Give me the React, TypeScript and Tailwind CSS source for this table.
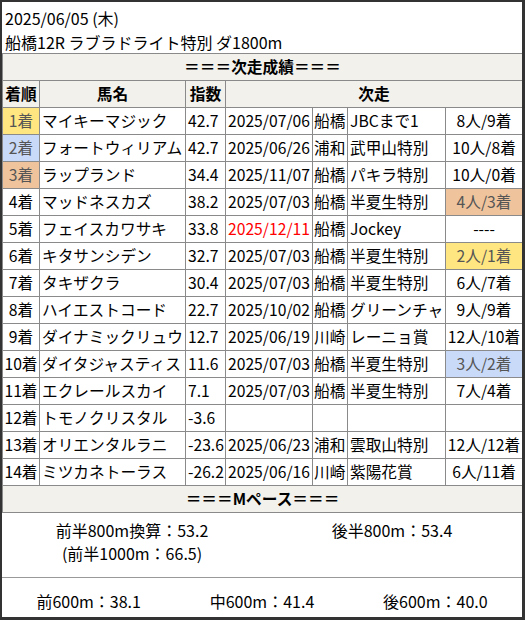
import React from "react";

type Row = {
  pos: string;
  name: string;
  idx: string;
  date: string;
  venue: string;
  race: string;
  res: string;
  posBg?: string;
  resBg?: string;
  red?: boolean;
};

const rows: Row[] = [
  { pos: "1着", name: "マイキーマジック", idx: "42.7", date: "2025/07/06", venue: "船橋", race: "JBCまで1", res: "8人/9着", posBg: "bg-[#ffe680]" },
  { pos: "2着", name: "フォートウィリアム", idx: "42.7", date: "2025/06/26", venue: "浦和", race: "武甲山特別", res: "10人/8着", posBg: "bg-[#c9daf8]" },
  { pos: "3着", name: "ラップランド", idx: "34.4", date: "2025/11/07", venue: "船橋", race: "パキラ特別", res: "10人/0着", posBg: "bg-[#efc49d]" },
  { pos: "4着", name: "マッドネスカズ", idx: "38.2", date: "2025/07/03", venue: "船橋", race: "半夏生特別", res: "4人/3着", resBg: "bg-[#efc49d]" },
  { pos: "5着", name: "フェイスカワサキ", idx: "33.8", date: "2025/12/11", venue: "船橋", race: "Jockey", res: "----", red: true },
  { pos: "6着", name: "キタサンシデン", idx: "32.7", date: "2025/07/03", venue: "船橋", race: "半夏生特別", res: "2人/1着", resBg: "bg-[#ffe680]" },
  { pos: "7着", name: "タキザクラ", idx: "30.4", date: "2025/07/03", venue: "船橋", race: "半夏生特別", res: "6人/7着" },
  { pos: "8着", name: "ハイエストコード", idx: "22.7", date: "2025/10/02", venue: "船橋", race: "グリーンチャ", res: "9人/9着" },
  { pos: "9着", name: "ダイナミックリュウ", idx: "12.7", date: "2025/06/19", venue: "川崎", race: "レーニョ賞", res: "12人/10着" },
  { pos: "10着", name: "ダイタジャスティス", idx: "11.6", date: "2025/07/03", venue: "船橋", race: "半夏生特別", res: "3人/2着", resBg: "bg-[#c9daf8]" },
  { pos: "11着", name: "エクレールスカイ", idx: "7.1", date: "2025/07/03", venue: "船橋", race: "半夏生特別", res: "7人/4着" },
  { pos: "12着", name: "トモノクリスタル", idx: "-3.6", date: "", venue: "", race: "", res: "" },
  { pos: "13着", name: "オリエンタルラニ", idx: "-23.6", date: "2025/06/23", venue: "浦和", race: "雲取山特別", res: "12人/12着" },
  { pos: "14着", name: "ミツカネトーラス", idx: "-26.2", date: "2025/06/16", venue: "川崎", race: "紫陽花賞", res: "6人/11着" },
];

const cell = "border border-[#8a8a8a] h-[27px] p-0 whitespace-nowrap overflow-hidden";

export default function App() {
  return (
    <div
      className="w-[525px] h-[620px] bg-white border-t-2 border-l-2 border-r-[3px] border-b-[3px] border-[#333333] text-black text-[16px] leading-[24px] overflow-hidden flex flex-col"
      style={{ fontFamily: '"Noto Sans CJK JP", "Noto Sans", sans-serif' }}
    >
      <div className="pt-[4px] pl-[3px] h-[51px]">
        <div>2025/06/05 (木)</div>
        <div>船橋12R ラブラドライト特別 ダ1800m</div>
      </div>
      <table className="w-[520px] table-fixed border-collapse text-[15.7px]">
        <colgroup>
          <col className="w-[37px]" />
          <col className="w-[146px]" />
          <col className="w-[40px]" />
          <col className="w-[87px]" />
          <col className="w-[35px]" />
          <col className="w-[98px]" />
          <col className="w-[77px]" />
        </colgroup>
        <tbody>
          <tr className="bg-[#f2f1ec]">
            <td colSpan={7} className={`${cell} text-center font-bold`}>
              ＝＝＝次走成績＝＝＝
            </td>
          </tr>
          <tr className="bg-[#f2f1ec] font-bold">
            <td className={`${cell} text-center`}>着順</td>
            <td className={`${cell} text-center`}>馬名</td>
            <td className={`${cell} text-center`}>指数</td>
            <td colSpan={4} className={`${cell} text-center`}>次走</td>
          </tr>
          {rows.map((r) => (
            <tr key={r.pos}>
              <td className={`${cell} text-center ${r.posBg ? r.posBg + " text-[#555]" : ""}`}>{r.pos}</td>
              <td className={`${cell} pl-[2px]`}>{r.name}</td>
              <td className={`${cell} pl-[2px]`}>{r.idx}</td>
              <td className={`${cell} pl-[2px] ${r.red ? "text-[#ff0000]" : ""}`}>{r.date}</td>
              <td className={`${cell} pl-[1px]`}>{r.venue}</td>
              <td className={`${cell} pl-[2px]`}>{r.race}</td>
              <td className={`${cell} text-center ${r.resBg ? r.resBg + " text-[#555]" : ""}`}>{r.res}</td>
            </tr>
          ))}
          <tr className="bg-[#f2f1ec]">
            <td colSpan={7} className={`${cell} text-center font-bold`}>
              ＝＝＝Mペース＝＝＝
            </td>
          </tr>
        </tbody>
      </table>
      <div className="flex h-[65px] pt-[6px] border-b border-[#999]">
        <div className="flex-1 text-center leading-[23px]">
          <div>前半800m換算：53.2</div>
          <div>(前半1000m：66.5)</div>
        </div>
        <div className="flex-1 text-center leading-[23px]">
          <div>後半800m：53.4</div>
        </div>
      </div>
      <div className="flex pt-[11px]">
        <div className="flex-1 text-center">前600m：38.1</div>
        <div className="flex-1 text-center">中600m：41.4</div>
        <div className="flex-1 text-center">後600m：40.0</div>
      </div>
    </div>
  );
}
